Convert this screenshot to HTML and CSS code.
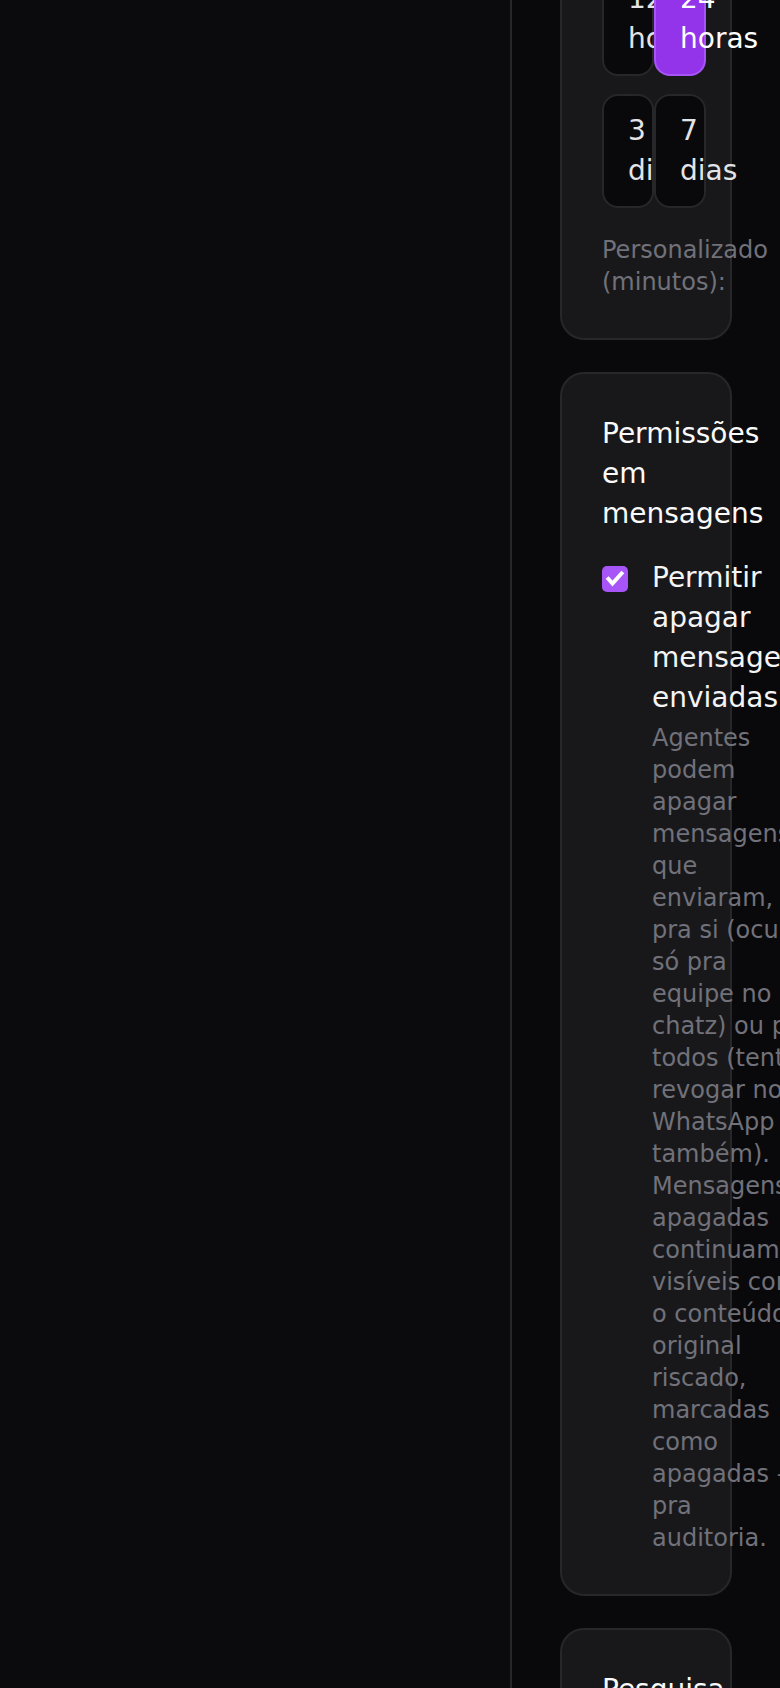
FILE: index.html
```html
<!DOCTYPE html>
<html lang="pt-BR">
<head>
<meta charset="utf-8">
<title>Configurações</title>
<link rel="stylesheet" href="styles.css">
</head>
<body>
<div class="app">
  <aside class="sidebar"></aside>
  <main class="main">
    <div class="stack">
      <section class="card">
        <div class="options">
          <button class="opt" type="button">12 horas</button>
          <button class="opt selected" type="button">24 horas</button>
          <button class="opt" type="button">3 dias</button>
          <button class="opt" type="button">7 dias</button>
        </div>
        <label class="custom-label">Personalizado (minutos):</label>
      </section>

      <section class="card">
        <h2 class="card-title">Permissões em mensagens</h2>
        <label class="check-row">
          <span class="check" role="checkbox" aria-checked="true">
            <svg viewBox="0 0 26 26" width="26" height="26" aria-hidden="true"><polyline points="6.5,13 10.5,17.5 19.5,7.5" fill="none" stroke="#ffffff" stroke-width="4" stroke-linecap="square" stroke-linejoin="miter"/></svg>
          </span>
          <span class="check-text">
            <span class="check-label">Permitir apagar mensagens enviadas</span>
            <span class="check-desc">Agentes podem apagar mensagens que enviaram, pra si (oculta só pra equipe no chatz) ou pra todos (tenta revogar no WhatsApp também). Mensagens apagadas continuam visíveis com o conteúdo original riscado, marcadas como apagadas — pra auditoria.</span>
          </span>
        </label>
      </section>

      <section class="card">
        <h2 class="card-title">Pesquisa de satisfação</h2>
        <p class="card-desc">Envie uma pesquisa ao encerrar o atendimento.</p>
      </section>
    </div>
  </main>
</div>
</body>
</html>
```

FILE: styles.css
```css
* {
  box-sizing: border-box;
}

html,
body {
  margin: 0;
  height: 100%;
}

body {
  background: #09090b;
  color: #fafafa;
  font-family: "DejaVu Sans", "Noto Sans", sans-serif;
  overflow: hidden;
}

.app {
  display: flex;
  min-height: 100%;
}

.sidebar {
  flex: none;
  width: 512px;
  background: #0b0b0d;
  border-right: 2px solid #27272a;
}

.main {
  flex: 1;
  min-width: 0;
  padding: 0 48px;
}

.stack {
  display: flex;
  flex-direction: column;
  gap: 32px;
  margin-top: -80px;
}

.card {
  background: #18181b;
  border: 2px solid #27272a;
  border-radius: 24px;
  padding: 40px;
}

.options {
  display: grid;
  grid-template-columns: repeat(2, minmax(0, 1fr));
  column-gap: 16px;
  row-gap: 18px;
}

.opt {
  margin: 0;
  padding: 15px 24px;
  font-family: inherit;
  font-size: 28px;
  line-height: 40px;
  text-align: left;
  color: #e4e4e7;
  background: #09090b;
  border: 2px solid #27272a;
  border-radius: 16px;
}

.opt.selected {
  background: #9333ea;
  border-color: #a855f7;
  color: #ffffff;
}

.custom-label {
  display: block;
  margin-top: 26px;
  font-size: 24px;
  line-height: 32px;
  color: #71717a;
}

.card-title {
  margin: 0 0 24px;
  font-size: 28px;
  line-height: 40px;
  font-weight: normal;
  color: #fafafa;
}

.card-desc {
  margin: 0;
  font-size: 24px;
  line-height: 32px;
  color: #71717a;
}

.check-row {
  display: flex;
  align-items: flex-start;
  gap: 24px;
}

.check {
  flex: none;
  display: flex;
  width: 26px;
  height: 26px;
  margin-top: 8px;
  background: #a855f7;
  border-radius: 5px;
}

.check-text {
  display: flex;
  flex-direction: column;
}

.check-label {
  display: block;
  font-size: 28px;
  line-height: 40px;
  color: #f4f4f5;
}

.check-desc {
  display: block;
  margin-top: 4px;
  font-size: 24px;
  line-height: 32px;
  color: #71717a;
}
```
